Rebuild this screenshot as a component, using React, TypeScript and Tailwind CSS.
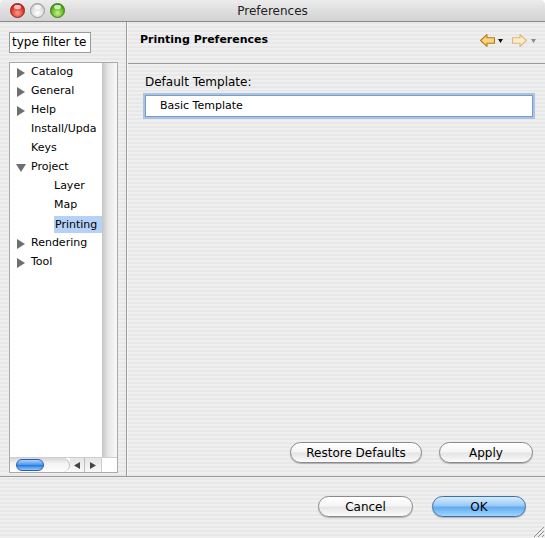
import React from 'react';

const FONT = "font-['DejaVu_Sans',sans-serif]";
const STRIPES =
  'bg-[repeating-linear-gradient(180deg,#efefef_0px,#efefef_2px,#e8e8e8_2px,#e8e8e8_4px)]';

const TreeArrow: React.FC<{ open?: boolean }> = ({ open }) => (
  <svg width="10" height="10" viewBox="0 0 10 10" className="shrink-0">
    {open ? <polygon points="0,1 10,1 5,9" fill="#6f6f6f" /> : <polygon points="1,0 9,5 1,10" fill="#6f6f6f" />}
  </svg>
);

const NavArrow: React.FC<{ dir: 'left' | 'right'; faded?: boolean }> = ({ dir, faded }) => {
  const fill = faded ? '#fbeccc' : '#fbd57f';
  const stroke = faded ? '#dcb777' : '#b47a12';
  const pts =
    dir === 'left'
      ? '0.5,6 6.5,0.5 6.5,3.5 13.5,3.5 13.5,8.5 6.5,8.5 6.5,11.5'
      : '13.5,6 7.5,0.5 7.5,3.5 0.5,3.5 0.5,8.5 7.5,8.5 7.5,11.5';
  return (
    <svg width="15" height="13" viewBox="0 0 14 12">
      <polygon points={pts} fill={fill} stroke={stroke} strokeWidth="1" strokeLinejoin="round" />
    </svg>
  );
};

const Drop: React.FC<{ gray?: boolean }> = ({ gray }) => (
  <svg width="5" height="4" viewBox="0 0 5 4">
    <polygon points="0,0 5,0 2.5,4" fill={gray ? '#8a8a8a' : '#111'} />
  </svg>
);

const AquaButton: React.FC<{ label: string; w: string; primary?: boolean }> = ({ label, w, primary }) => (
  <button
    className={`${w} h-[21px] rounded-full border text-[12px] leading-none text-black shadow-[0_1px_1px_rgba(0,0,0,0.25)] ${
      primary
        ? 'border-[#3f6fa8] bg-[linear-gradient(to_bottom,#d6ebff_0%,#96c9f6_48%,#5ea9ee_52%,#9fd6ff_100%)]'
        : 'border-[#8a8a8a] bg-[linear-gradient(to_bottom,#ffffff_0%,#f5f5f5_48%,#e4e4e4_52%,#fbfbfb_100%)]'
    }`}
  >
    {label}
  </button>
);

const TREE: { label: string; level: number; arrow?: 'closed' | 'open'; selected?: boolean }[] = [
  { label: 'Catalog', level: 0, arrow: 'closed' },
  { label: 'General', level: 0, arrow: 'closed' },
  { label: 'Help', level: 0, arrow: 'closed' },
  { label: 'Install/Upda', level: 0 },
  { label: 'Keys', level: 0 },
  { label: 'Project', level: 0, arrow: 'open' },
  { label: 'Layer', level: 1 },
  { label: 'Map', level: 1 },
  { label: 'Printing', level: 1, selected: true },
  { label: 'Rendering', level: 0, arrow: 'closed' },
  { label: 'Tool', level: 0, arrow: 'closed' },
];

const Light: React.FC<{ kind: 'red' | 'gray' | 'green' }> = ({ kind }) => {
  const cls =
    kind === 'red'
      ? 'bg-[radial-gradient(circle_at_50%_70%,#ff9a8a_0%,#e0392b_55%,#a8160c_100%)] border-[#8c2018]'
      : kind === 'green'
      ? 'bg-[radial-gradient(circle_at_50%_70%,#c8f58a_0%,#5bb51e_55%,#2f7a0c_100%)] border-[#3d7a16]'
      : 'bg-[radial-gradient(circle_at_50%_70%,#ffffff_0%,#dcdcdc_55%,#b0b0b0_100%)] border-[#9a9a9a]';
  return (
    <div className={`relative w-[15px] h-[15px] rounded-full border ${cls}`}>
      <div className="absolute left-[3px] top-[1px] w-[7px] h-[4px] rounded-full bg-white/70" />
    </div>
  );
};

export default function App() {
  return (
    <div className={`w-[545px] h-[538px] bg-white ${FONT}`}>
      <div className={`w-[545px] h-[538px] flex flex-col rounded-t-[5px] overflow-hidden ${STRIPES}`}>
        {/* Title bar */}
        <div className="relative h-[22px] shrink-0 flex items-center border-b border-[#8a8a8a] bg-[linear-gradient(to_bottom,#ececec,#d2d2d2)]">
          <div className="absolute left-[10px] top-[3px] flex gap-[5px]">
            <Light kind="red" />
            <Light kind="gray" />
            <Light kind="green" />
          </div>
          <div className="w-full text-center text-[12px] text-[#222]">Preferences</div>
        </div>

        {/* Body */}
        <div className="flex h-[454px] shrink-0">
          {/* Left pane */}
          <div className="w-[126px] shrink-0 flex flex-col pl-[9px] pt-[10px]">
            <div className="w-[82px] h-[21px] bg-white border border-[#9a9a9a] overflow-hidden whitespace-nowrap text-[12px] leading-[19px] pl-[2px] text-black">
              type filter te
            </div>
            <div className="mt-[9px] w-[109px] h-[411px] border border-[#aaaaaa] bg-white flex flex-col">
              <div className="flex flex-1 min-h-0">
                <div className="flex-1 overflow-hidden">
                  {TREE.map((n) => (
                    <div key={n.label} className="h-[19px] flex items-center whitespace-nowrap text-[11px] text-black">
                      <div className={n.level === 0 ? 'w-[21px] pl-[6px] shrink-0' : 'w-[44px] shrink-0'}>
                        {n.arrow && <TreeArrow open={n.arrow === 'open'} />}
                      </div>
                      <span className={n.selected ? 'bg-[#b5d1f7] pl-px pr-[4px] h-[17px] leading-[17px] flex-1' : ''}>{n.label}</span>
                    </div>
                  ))}
                </div>
                <div className="w-[15px] shrink-0 bg-[linear-gradient(to_right,#c4c4c4,#e6e6e6_40%,#f8f8f8)]" />
              </div>
              {/* Horizontal scrollbar */}
              <div className="h-[15px] shrink-0 flex border-t border-[#cfcfcf]">
                <div className="w-[60px] relative bg-[linear-gradient(to_bottom,#d6d6d6,#f4f4f4_40%,#fdfdfd)] rounded-r-full border-r border-[#bdbdbd]">
                  <div className="absolute left-[6px] top-[1px] w-[28px] h-[12px] rounded-full border border-[#2a5db0] bg-[linear-gradient(to_bottom,#a9d3ff,#4a94ea_50%,#2e7be0_55%,#8dcbff)]" />
                </div>
                <div className="w-[15px] flex items-center justify-center border-r border-[#bdbdbd] bg-[linear-gradient(to_bottom,#e4e4e4,#fafafa)]">
                  <svg width="6" height="7" viewBox="0 0 6 7"><polygon points="6,0 0,3.5 6,7" fill="#444" /></svg>
                </div>
                <div className="w-[16px] flex items-center justify-center bg-[linear-gradient(to_bottom,#e4e4e4,#fafafa)]">
                  <svg width="6" height="7" viewBox="0 0 6 7"><polygon points="0,0 6,3.5 0,7" fill="#444" /></svg>
                </div>
                <div className="flex-1 bg-white border-l border-[#cfcfcf]" />
              </div>
            </div>
          </div>

          <div className="w-px bg-[#9c9c9c]" />
          <div className="w-px bg-[#f6f6f6]" />

          {/* Right pane */}
          <div className="flex-1 flex flex-col">
            <div className="h-[42px] shrink-0 flex items-center justify-between border-b border-[#9a9a9a] pl-[12px] pr-[9px] pb-[4px]">
              <div className="text-[11px] font-bold text-black">Printing Preferences</div>
              <div className="flex items-center">
                <NavArrow dir="left" />
                <div className="ml-[3px] mr-[9px]"><Drop /></div>
                <NavArrow dir="right" faded />
                <div className="ml-[4px]"><Drop gray /></div>
              </div>
            </div>
            <div className="flex-1 flex flex-col pl-[17px] pr-[12px]">
              <div className="mt-[11px] text-[12px] leading-[15px] text-black">Default Template:</div>
              <div className="mt-[5px] h-[22px] bg-white border border-[#7d9cc4] shadow-[0_0_0_2px_#a9c3e2] flex items-center pl-[14px] text-[11px] text-black">
                Basic Template
              </div>
              <div className="flex-1" />
              <div className="flex justify-end gap-[17px] mb-[13px]">
                <AquaButton label="Restore Defaults" w="w-[132px]" />
                <AquaButton label="Apply" w="w-[94px]" />
              </div>
            </div>
          </div>
        </div>

        {/* Bottom */}
        <div className="h-px bg-[#9a9a9a] shrink-0" />
        <div className="relative flex-1 flex justify-end items-start gap-[19px] pt-[19px] pr-[19px]">
          <AquaButton label="Cancel" w="w-[95px]" />
          <AquaButton label="OK" w="w-[94px]" primary />
          <svg className="absolute right-[1px] bottom-[1px]" width="13" height="12" viewBox="0 0 13 12">
            <line x1="3" y1="12" x2="13" y2="2" stroke="#8c8c8c" strokeWidth="1" />
            <line x1="7" y1="12" x2="13" y2="6" stroke="#8c8c8c" strokeWidth="1" />
            <line x1="11" y1="12" x2="13" y2="10" stroke="#8c8c8c" strokeWidth="1" />
          </svg>
        </div>
      </div>
    </div>
  );
}
